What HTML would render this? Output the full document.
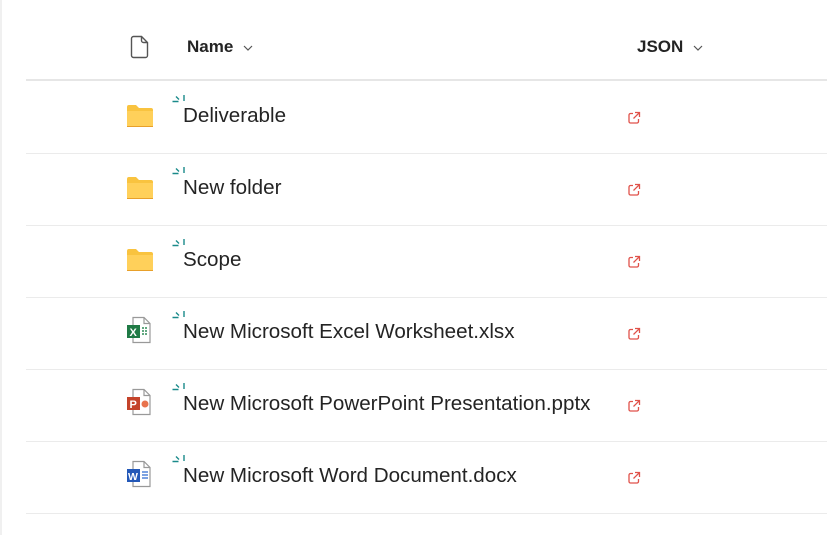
<!DOCTYPE html>
<html><head><style>
body{margin:0;width:827px;height:535px;background:#fff;position:relative;overflow:hidden;font-family:"Segoe UI","Liberation Sans",sans-serif;color:#242424}
.vl{position:absolute;left:0;top:0;width:2px;height:535px;background:#f0f0f0}
.hl{position:absolute;left:26px;right:0;height:1px;background:#ebebeb}
.hd{position:absolute;top:37px;font-weight:bold;font-size:17px}
.hd svg{margin-left:10px;vertical-align:middle}
.row{position:absolute;left:0;width:827px;height:72px}
.name{position:absolute;left:183px;top:23px;font-size:20.6px;white-space:nowrap}
.ic{position:absolute;left:125px;top:20px}
.sp{position:absolute;left:172px;top:14px}
.lk{position:absolute;left:627px;top:30px}
</style></head><body>
<div class="vl"></div>
<svg style="position:absolute;left:129px;top:35px" width="22" height="24" viewBox="0 0 22 24"><path d="M2.5 3.5a2 2 0 0 1 2-2h8l6 6v13a2 2 0 0 1-2 2h-12a2 2 0 0 1-2-2z M12.5 1.5v4a2 2 0 0 0 2 2h4" fill="none" stroke="#555" stroke-width="1.4"/></svg>
<div class="hd" style="left:187px">Name<svg width="10" height="8"><path d="M1 2l4 4 4-4" fill="none" stroke="#555" stroke-width="1.2"/></svg></div>
<div class="hd" style="left:637px">JSON<svg width="10" height="8"><path d="M1 2l4 4 4-4" fill="none" stroke="#555" stroke-width="1.2"/></svg></div>
<div class="hl" style="top:79px;height:2px;background:#e6e6e6"></div>

<div class="row" style="top:81px">
<svg class="ic" width="30" height="30"><path d="M2 6a2 2 0 0 1 2-2h7l3 3h12a2 2 0 0 1 2 2v15a2 2 0 0 1-2 2H4a2 2 0 0 1-2-2z" fill="#f9c33f"/><path d="M2 10h26v14a2 2 0 0 1-2 2H4a2 2 0 0 1-2-2z" fill="#ffd05a"/><rect x="2" y="25" width="26" height="1" fill="#e8a02a"/></svg>
<svg class="sp" width="14" height="14"><path d="M0.5 6.5h6M4 1.5l3 3M12 0v6" stroke="#1a8a8a" stroke-width="1.4"/></svg>
<div class="name">Deliverable</div>
<svg class="lk" width="14" height="14"><path d="M6 2.5H3.5a1.5 1.5 0 0 0-1.5 1.5v6.5a1.5 1.5 0 0 0 1.5 1.5H10a1.5 1.5 0 0 0 1.5-1.5V8M8 1.5h4.5V6M12.5 1.5 6.5 7.5" fill="none" stroke="#e0524a" stroke-width="1.3"/></svg>
</div>
<div class="hl" style="top:153px"></div>

<div class="row" style="top:153px">
<svg class="ic" width="30" height="30"><path d="M2 6a2 2 0 0 1 2-2h7l3 3h12a2 2 0 0 1 2 2v15a2 2 0 0 1-2 2H4a2 2 0 0 1-2-2z" fill="#f9c33f"/><path d="M2 10h26v14a2 2 0 0 1-2 2H4a2 2 0 0 1-2-2z" fill="#ffd05a"/><rect x="2" y="25" width="26" height="1" fill="#e8a02a"/></svg>
<svg class="sp" width="14" height="14"><path d="M0.5 6.5h6M4 1.5l3 3M12 0v6" stroke="#1a8a8a" stroke-width="1.4"/></svg>
<div class="name">New folder</div>
<svg class="lk" width="14" height="14"><path d="M6 2.5H3.5a1.5 1.5 0 0 0-1.5 1.5v6.5a1.5 1.5 0 0 0 1.5 1.5H10a1.5 1.5 0 0 0 1.5-1.5V8M8 1.5h4.5V6M12.5 1.5 6.5 7.5" fill="none" stroke="#e0524a" stroke-width="1.3"/></svg>
</div>
<div class="hl" style="top:225px"></div>

<div class="row" style="top:225px">
<svg class="ic" width="30" height="30"><path d="M2 6a2 2 0 0 1 2-2h7l3 3h12a2 2 0 0 1 2 2v15a2 2 0 0 1-2 2H4a2 2 0 0 1-2-2z" fill="#f9c33f"/><path d="M2 10h26v14a2 2 0 0 1-2 2H4a2 2 0 0 1-2-2z" fill="#ffd05a"/><rect x="2" y="25" width="26" height="1" fill="#e8a02a"/></svg>
<svg class="sp" width="14" height="14"><path d="M0.5 6.5h6M4 1.5l3 3M12 0v6" stroke="#1a8a8a" stroke-width="1.4"/></svg>
<div class="name">Scope</div>
<svg class="lk" width="14" height="14"><path d="M6 2.5H3.5a1.5 1.5 0 0 0-1.5 1.5v6.5a1.5 1.5 0 0 0 1.5 1.5H10a1.5 1.5 0 0 0 1.5-1.5V8M8 1.5h4.5V6M12.5 1.5 6.5 7.5" fill="none" stroke="#e0524a" stroke-width="1.3"/></svg>
</div>
<div class="hl" style="top:297px"></div>

<div class="row" style="top:297px">
<svg class="ic" width="30" height="30" style="top:18px"><path d="M8 2.5h11l6 6v19h-17z" fill="#fff" stroke="#999" stroke-width="1.2"/><path d="M19 2.5v6h6" fill="none" stroke="#999" stroke-width="1.2"/><rect x="2" y="10" width="13" height="13" fill="#1f7a45"/><text x="4.5" y="21" font-size="11" font-family="Liberation Sans" fill="#fff" font-weight="bold">X</text><path d="M17 13h6M17 16h6M17 19h6" stroke="#2e8b57" stroke-width="1.5" stroke-dasharray="2 1"/></svg>
<svg class="sp" width="14" height="14"><path d="M0.5 6.5h6M4 1.5l3 3M12 0v6" stroke="#1a8a8a" stroke-width="1.4"/></svg>
<div class="name">New Microsoft Excel Worksheet.xlsx</div>
<svg class="lk" width="14" height="14"><path d="M6 2.5H3.5a1.5 1.5 0 0 0-1.5 1.5v6.5a1.5 1.5 0 0 0 1.5 1.5H10a1.5 1.5 0 0 0 1.5-1.5V8M8 1.5h4.5V6M12.5 1.5 6.5 7.5" fill="none" stroke="#e0524a" stroke-width="1.3"/></svg>
</div>
<div class="hl" style="top:369px"></div>

<div class="row" style="top:369px">
<svg class="ic" width="30" height="30" style="top:18px"><path d="M8 2.5h11l6 6v19h-17z" fill="#fff" stroke="#999" stroke-width="1.2"/><path d="M19 2.5v6h6" fill="none" stroke="#999" stroke-width="1.2"/><rect x="2" y="10" width="13" height="13" fill="#c4432a"/><text x="4.5" y="21" font-size="11" font-family="Liberation Sans" fill="#fff" font-weight="bold">P</text><circle cx="20" cy="17" r="3.5" fill="#e8734d"/></svg>
<svg class="sp" width="14" height="14"><path d="M0.5 6.5h6M4 1.5l3 3M12 0v6" stroke="#1a8a8a" stroke-width="1.4"/></svg>
<div class="name">New Microsoft PowerPoint Presentation.pptx</div>
<svg class="lk" width="14" height="14"><path d="M6 2.5H3.5a1.5 1.5 0 0 0-1.5 1.5v6.5a1.5 1.5 0 0 0 1.5 1.5H10a1.5 1.5 0 0 0 1.5-1.5V8M8 1.5h4.5V6M12.5 1.5 6.5 7.5" fill="none" stroke="#e0524a" stroke-width="1.3"/></svg>
</div>
<div class="hl" style="top:441px"></div>

<div class="row" style="top:441px">
<svg class="ic" width="30" height="30" style="top:18px"><path d="M8 2.5h11l6 6v19h-17z" fill="#fff" stroke="#999" stroke-width="1.2"/><path d="M19 2.5v6h6" fill="none" stroke="#999" stroke-width="1.2"/><rect x="2" y="10" width="13" height="13" fill="#2358b8"/><text x="3" y="21" font-size="10.5" font-family="Liberation Sans" fill="#fff" font-weight="bold">W</text><path d="M17 13h6M17 16h6M17 19h6" stroke="#2f6bd0" stroke-width="1.3"/></svg>
<svg class="sp" width="14" height="14"><path d="M0.5 6.5h6M4 1.5l3 3M12 0v6" stroke="#1a8a8a" stroke-width="1.4"/></svg>
<div class="name">New Microsoft Word Document.docx</div>
<svg class="lk" width="14" height="14"><path d="M6 2.5H3.5a1.5 1.5 0 0 0-1.5 1.5v6.5a1.5 1.5 0 0 0 1.5 1.5H10a1.5 1.5 0 0 0 1.5-1.5V8M8 1.5h4.5V6M12.5 1.5 6.5 7.5" fill="none" stroke="#e0524a" stroke-width="1.3"/></svg>
</div>
<div class="hl" style="top:513px"></div>
</body></html>
